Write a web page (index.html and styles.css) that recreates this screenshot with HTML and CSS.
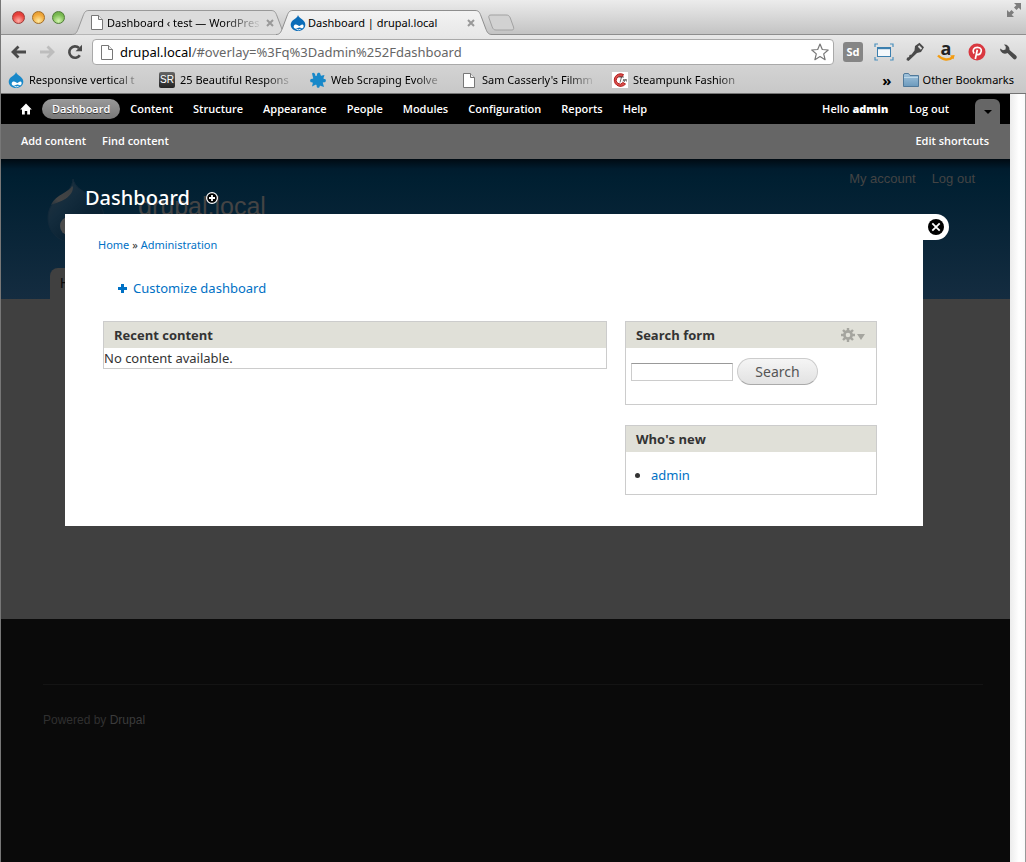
FILE: index.html
```html
<!DOCTYPE html>
<html lang="en">
<head>
<meta charset="utf-8">
<title>Dashboard | drupal.local</title>
<link rel="stylesheet" href="styles.css">
</head>
<body>
<svg class="defs" width="0" height="0" aria-hidden="true">
  <defs>
    <linearGradient id="tabOn" x1="0" y1="0" x2="0" y2="1"><stop offset="0" stop-color="#f3f3f3"/><stop offset="1" stop-color="#e8e8e8"/></linearGradient>
    <linearGradient id="folder" x1="0" y1="0" x2="0" y2="1"><stop offset="0" stop-color="#a3c4dc"/><stop offset="1" stop-color="#6c9abd"/></linearGradient>
    <linearGradient id="drop" x1="0" y1="0" x2="1" y2="1"><stop offset="0" stop-color="#26343e"/><stop offset=".35" stop-color="#142c3d"/><stop offset=".6" stop-color="#0b2334"/><stop offset="1" stop-color="#0a1f30"/></linearGradient>
    <linearGradient id="shine" x1="1" y1="0" x2="0" y2="1"><stop offset="0" stop-color="#3a3f42"/><stop offset=".7" stop-color="#444"/><stop offset="1" stop-color="#26343e"/></linearGradient>
  </defs>
  <symbol id="i-page" viewBox="0 0 12 15"><path d="M.5 .5H7.5L11.500 4.500V14.500H.5Z" fill="#fff" stroke="#777"/><path d="M7.500 .5V4.500H11.500" fill="#eee" stroke="#777"/></symbol>
  <symbol id="i-drupal" viewBox="0 0 16 16"><path d="M8 0C8.500 2 10 2.800 12 4.300C14 5.800 15.300 7.500 15.300 9.700C15.300 13.300 12 16 8 16S.7 13.300 .7 9.700C.7 7.500 2 5.800 4 4.500C6 3.200 7.500 2.200 8 0Z" fill="currentColor"/><path d="M4.200 13C3 11.500 4 9.500 5.800 9.500C7.500 9.500 8.500 11 9.300 11C10.200 11 11 9.500 12.500 9.600C14 9.800 14 12.800 12.600 13.200C11.500 13.500 10.500 12.500 9.500 12.500C8 12.500 5.800 14.700 4.200 13Z" fill="#fff"/><path d="M6.500 14.400Q8.500 15.400 10.600 14.300" fill="none" stroke="#fff" stroke-width=".9"/></symbol>
</svg>

<div class="window">
  <header class="chrome">
    <div class="tabstrip">
      <div class="lights">
        <button class="light red" aria-label="Close window"></button>
        <button class="light amber" aria-label="Minimize"></button>
        <button class="light green" aria-label="Zoom"></button>
      </div>
      <div class="tab">
        <svg class="tab-shape" viewBox="0 0 216 25" aria-hidden="true"><path d="M0 24.500C4 24.500 5 22 6.500 18L11 6C12.500 2 13.500 .5 17 .5H199C202.500 .5 203.500 2 205 6L209.500 18C211 22 212 24.500 216 24.500" fill="#dcdcdc" stroke="#999"/></svg>
        <svg class="page-icon" aria-hidden="true"><use href="#i-page"/></svg>
        <span class="tab-title fade">Dashboard ‹ test — WordPres</span>
        <button class="tab-close" aria-label="Close tab"><svg viewBox="0 0 8 8"><path d="M1 1L7 7M7 1L1 7"/></svg></button>
      </div>
      <div class="tab active">
        <svg class="tab-shape" viewBox="0 0 216 25" aria-hidden="true"><path d="M0 25V24.500C4 24.500 5 22 6.500 18L11 6C12.500 2 13.500 .5 17 .5H199C202.500 .5 203.500 2 205 6L209.500 18C211 22 212 24.500 216 24.500V25" fill="url(#tabOn)"/><path d="M0 24.500C4 24.500 5 22 6.500 18L11 6C12.500 2 13.500 .5 17 .5H199C202.500 .5 203.500 2 205 6L209.500 18C211 22 212 24.500 216 24.500" fill="none" stroke="#8e8e8e"/></svg>
        <svg class="drupal-icon dark" aria-hidden="true"><use href="#i-drupal"/></svg>
        <span class="tab-title">Dashboard | drupal.local</span>
        <button class="tab-close" aria-label="Close tab"><svg viewBox="0 0 8 8"><path d="M1 1L7 7M7 1L1 7"/></svg></button>
      </div>
      <button class="new-tab" aria-label="New tab"><svg viewBox="0 0 28 17"><path d="M4 1H19C21.500 1 22.500 2 23.300 4L26.500 13C27 15 26.500 16 25 16H9C7 16 6 15 5.200 13L2 4C1.300 2 2 1 4 1Z" fill="#d2d2d2" stroke="#a2a2a2"/></svg></button>
      <button class="fullscreen" aria-label="Full screen"><svg viewBox="0 0 14 14"><path d="M7 0H14V7L11.700 4.700L9.500 7L7 4.500L9.300 2.300ZM7 14H0V7L2.300 9.300L4.500 7L7 9.500L4.700 11.700Z" fill="#7d7d7d"/></svg></button>
    </div>

    <div class="navbar">
      <div class="nav-buttons">
        <button aria-label="Back"><svg viewBox="0 0 16 14"><path d="M7.500 1.500L2 7L7.500 12.500M2.500 7H15" fill="none" stroke="#4a4a4a" stroke-width="2.800"/></svg></button>
        <button aria-label="Forward"><svg viewBox="0 0 16 14"><path d="M8.500 1.500L14 7L8.500 12.500M13.500 7H1" fill="none" stroke="#bdbdbd" stroke-width="2.800"/></svg></button>
        <button aria-label="Reload"><svg viewBox="0 0 16 16"><path d="M12.800 11.200A5.700 5.700 0 1 1 12 4" fill="none" stroke="#4a4a4a" stroke-width="2.600"/><path d="M15 .8V7.200H8.600Z" fill="#4a4a4a"/></svg></button>
      </div>
      <div class="omnibox">
        <svg class="page-icon" aria-hidden="true"><use href="#i-page"/></svg>
        <a class="url" href="#overlay"><span class="host">drupal.local</span>/#overlay=%3Fq%3Dadmin%252Fdashboard</a>
        <button class="star" aria-label="Bookmark this page"><svg viewBox="0 0 18 18"><path d="M9 1L11.300 6.500L17.200 7L12.700 10.900L14.100 16.700L9 13.600L3.900 16.700L5.300 10.900L.8 7L6.700 6.500Z" fill="#fff" stroke="#777" stroke-width="1.200" stroke-linejoin="round"/></svg></button>
      </div>
      <div class="extensions">
        <button class="sd">Sd</button>
        <button aria-label="Window resizer"><svg viewBox="0 0 20 20"><path d="M1 5V2H4M16 2H19V5M19 15V18H16M4 18H1V15" fill="none" stroke="#4a90bd" stroke-width="1.200"/><rect x="3.500" y="5.500" width="13" height="9" fill="#f4f8fb" stroke="#3c7fae"/><path d="M3 6.200H17" stroke="#3c7fae" stroke-width="2"/></svg></button>
        <button aria-label="Key"><svg viewBox="0 0 20 20"><path d="M10 4L14.500 .8L19 5.300L16 10L12 11L3.500 19L1.500 18L2 15.800L4 15L4.500 13L6.500 12.500L9.500 8.500Z" fill="#4a4a4a"/><path d="M13.500 4L16.500 7" stroke="#ddd" stroke-width="2"/></svg></button>
        <button class="amazon" aria-label="Amazon"><span>a</span><svg viewBox="0 0 20 20"><path d="M2 13.500C7 18.500 13 18.500 17 15" fill="none" stroke="#f39c12" stroke-width="2.400"/><path d="M14 13.500L18.700 13L17.500 17.300Z" fill="#f39c12"/></svg></button>
        <button aria-label="Pinterest"><svg viewBox="0 0 20 20"><circle cx="10" cy="10" r="8.500" fill="#d93840"/><path d="M7 11.500C4.800 8 7 5.300 10.500 5.300C14.500 5.300 15 8.700 13.600 11C12.500 13 10.200 13.200 9.300 11.700M10.300 7.800L8.300 17" fill="none" stroke="#fff" stroke-width="1.700"/></svg></button>
        <button aria-label="Settings"><svg viewBox="0 0 20 20"><path d="M6 2.500A5 5 0 0 1 11.500 8L18 13.500A2.100 2.100 0 0 1 15.300 16.800L9.500 11A5 5 0 0 1 2 6.500L5 8.300L7.500 7.500L7.800 4.700Z" fill="#4a4a4a"/></svg></button>
      </div>
    </div>

    <nav class="bookmarks" aria-label="Bookmarks">
      <a class="bookmark" href="#"><svg class="drupal-icon" aria-hidden="true"><use href="#i-drupal"/></svg><span class="fade">Responsive vertical t</span></a>
      <a class="bookmark" href="#"><span class="sr">SR</span><span class="fade">25 Beautiful Respons</span></a>
      <a class="bookmark" href="#"><svg class="drupal-icon" viewBox="0 0 16 16" aria-hidden="true"><path d="M2 1.500C3.500 0 5 1 5.500 4C6.500 4 7 3.500 7 2.500C7 0 10.500 0 10.500 2.500C10.500 3.500 11 4 12 3.500L14.500 3L13.500 6C13.500 7 14 7 15 7C16.500 7.500 16 10.500 14 10.200C13 10 12.500 10.500 13 11.500L14 15L11 14C10 13.500 9.700 14 9.500 15C9 16.500 6.500 16 6.700 14C6.700 13 6 12.500 5 13L2 14.500L2.700 11.500C3 10.500 2.500 10 1.500 10.200C-.5 10 -.3 6.800 2 6.800C3 7 3.500 6.500 3 5.500Z" fill="#1888c9"/></svg><span class="fade">Web Scraping Evolve</span></a>
      <a class="bookmark" href="#"><svg class="page-icon" aria-hidden="true"><use href="#i-page"/></svg><span class="fade">Sam Casserly's Filmm</span></a>
      <a class="bookmark" href="#"><svg class="drupal-icon" viewBox="0 0 16 16" aria-hidden="true"><path d="M0 0H16V16H0Z" fill="#fff"/><path d="M11.500 2.500A6.300 6.300 0 1 0 13.500 12L11 10.500A3.800 3.800 0 1 1 10 5Z" fill="#d8504c" stroke="#b51c1c"/><path d="M6.500 5H12M9.500 5L8 10.500M11 9.500L12 7L12.500 9.500L14 7L14.500 9.500" fill="none" stroke="#444" stroke-width=".8"/></svg><span class="fade">Steampunk Fashion</span></a>
      <button class="more" aria-label="More bookmarks">»</button>
      <a class="other" href="#"><svg viewBox="0 0 16 14" aria-hidden="true"><path d="M.5 13.500V2Q.5 .5 2 .5H5.500L7 2.500H15.500V13.500Z" fill="url(#folder)" stroke="#50799a"/><path d="M1 4.500H15" stroke="#bdd7e8"/></svg>Other Bookmarks</a>
    </nav>
  </header>

  <div class="viewport">
    <div class="page">
      <div class="admin-bar">
        <nav class="menu" aria-label="Administration">
          <a class="home" href="#" aria-label="Home"><svg viewBox="0 0 12 12"><path d="M6 .5L11.800 6.500H10V11.500H7.200V8H4.800V11.500H2V6.500H.2Z" fill="#fff"/></svg></a>
          <a class="current" href="#">Dashboard</a>
          <a href="#">Content</a>
          <a href="#">Structure</a>
          <a href="#">Appearance</a>
          <a href="#">People</a>
          <a href="#">Modules</a>
          <a href="#">Configuration</a>
          <a href="#">Reports</a>
          <a href="#">Help</a>
        </nav>
        <div class="account">
          <a href="#">Hello <b>admin</b></a>
          <a href="#">Log out</a>
          <button class="toggle" aria-label="Hide shortcuts"><svg viewBox="0 0 8 4"><path d="M0 0H8L4 4Z"/></svg></button>
        </div>
      </div>
      <nav class="shortcuts" aria-label="Shortcuts">
        <a href="#">Add content</a>
        <a href="#">Find content</a>
        <a class="edit" href="#">Edit shortcuts</a>
      </nav>

      <div class="stage">
        <div class="site">
          <div class="site-header">
            <div class="site-brand">
              <svg class="site-logo" viewBox="0 0 58 66" aria-hidden="true"><path d="M26 0C28 8 34 11 42 16C51 22 57 29 57 39C57 54 45 64 29 64S1 54 1 39C1 29 6 22 14 17C21 12 25 9 26 0Z" fill="url(#drop)" stroke="#12293a"/><path d="M25 7C23 13 9 15 4 26C9 24 26 20 26 8Z" fill="url(#shine)"/><ellipse cx="21" cy="47" rx="8" ry="9" fill="#4b4b4b"/></svg>
              <span class="site-name">drupal.local</span>
              <div class="site-account"><a href="#">My account</a><a href="#">Log out</a></div>
            </div>
            <a class="site-tab" href="#">Home</a>
          </div>
          <div class="site-main"></div>
          <footer class="site-footer"><p>Powered by <a href="#">Drupal</a></p></footer>
        </div>

        <section class="overlay">
          <div class="overlay-head">
            <h1>Dashboard</h1>
            <button class="add" aria-label="Add to shortcuts"><svg viewBox="0 0 12 12"><circle cx="6" cy="6" r="5.400" fill="#000" stroke="#fff" stroke-width="1.200"/><path d="M6 3V9M3 6H9" stroke="#fff" stroke-width="1.800"/></svg></button>
          </div>
          <div class="panel">
            <button class="close" aria-label="Close overlay"><svg viewBox="0 0 16 16"><circle cx="8" cy="8" r="8"/><path d="M4.300 4.300L11.700 11.700M11.700 4.300L4.300 11.700" stroke="#fff" stroke-width="1.800"/></svg></button>
            <div class="crumbs"><a href="#">Home</a> » <a href="#">Administration</a></div>
            <a class="customize" href="#"><svg viewBox="0 0 9 9" aria-hidden="true"><path d="M4.500 0V9M0 4.500H9" stroke="#0071c5" stroke-width="3"/></svg>Customize dashboard</a>
            <div class="columns">
              <div class="block">
                <h2>Recent content</h2>
                <p class="empty">No content available.</p>
              </div>
              <div class="side">
                <div class="block">
                  <h2>Search form
                    <button class="gear" aria-label="Configure block"><svg viewBox="0 0 24 14"><g stroke="#a5a59f" fill="none"><circle cx="7" cy="7" r="3.600" stroke-width="2.600"/><path d="M7 0V3M7 11V14M0 7H3M11 7H14M2 2L4.200 4.200M9.800 9.800L12 12M12 2L9.800 4.200M4.200 9.800L2 12" stroke-width="2.400"/></g><path d="M16 6H24L20 12Z" fill="#a5a59f"/></svg></button>
                  </h2>
                  <form class="search">
                    <input type="text" aria-label="Search">
                    <button type="button">Search</button>
                  </form>
                </div>
                <div class="block">
                  <h2>Who's new</h2>
                  <ul><li><a href="#">admin</a></li></ul>
                </div>
              </div>
            </div>
          </div>
        </section>
      </div>
    </div>
    <div class="scrollbar"></div>
  </div>
</div>
</body>
</html>
```
FILE: styles.css
```css
* { box-sizing: border-box; }
body { margin: 0; font: 12px/16px "Noto Sans", "Open Sans", sans-serif; color: #000; }
a { color: inherit; text-decoration: none; }
button { margin: 0; padding: 0; border: 0; background: none; font: inherit; color: inherit; display: flex; align-items: center; justify-content: center; }
h1, h2, p, ul { margin: 0; padding: 0; }
.defs { position: absolute; }
.window { min-height: 100vh; display: flex; flex-direction: column; border-left: 1px solid #777; }

/* browser chrome */
.chrome { border-bottom: 1px solid #747474; background: #cecece; }
.tabstrip { display: flex; align-items: flex-end; height: 35px; padding: 0 5px 0 11px; background: linear-gradient(#ececec, #c2c2c2); box-shadow: inset 0 -1px #8e8e8e; }
.lights { display: flex; gap: 7px; width: 53px; height: 24px; margin-right: 7px; }
.light { width: 13px; height: 13px; flex: none; border-radius: 50%; border: 1px solid; }
.red { background: radial-gradient(circle at 50% 80%, #ffb0a8, #e8433d 60%, #d33); border-color: #9c3a38; }
.amber { background: radial-gradient(circle at 50% 80%, #ffe9a0, #f0a83a 60%, #dc9331); border-color: #a26d25; }
.green { background: radial-gradient(circle at 50% 80%, #d5f5b0, #7bbc52 60%, #68a744); border-color: #4f7c37; }
.tab { position: relative; isolation: isolate; display: flex; align-items: center; width: 216px; height: 25px; padding: 0 14px 0 19px; gap: 4px; }
.tab.active { z-index: 1; margin-left: -12px; padding-left: 14px; padding-right: 17px; gap: 2px; }
.tab-shape { position: absolute; inset: 0; z-index: -1; width: 100%; height: 100%; }
.tab-title { flex: 1; overflow: hidden; white-space: nowrap; font-size: 11px; }
.tab-close svg { width: 8px; height: 8px; stroke: #999; stroke-width: 2; }
.fade { -webkit-mask-image: linear-gradient(90deg, #000 75%, transparent); mask-image: linear-gradient(90deg, #000 75%, transparent); }
.page-icon { width: 12px; height: 15px; flex: none; }
.drupal-icon { width: 16px; height: 16px; flex: none; color: #1888c9; }
.drupal-icon.dark { color: #0a6cb8; }
.new-tab { width: 28px; height: 17px; margin: 0 0 4px -5px; }
.fullscreen { width: 14px; height: 14px; margin: 0 0 18px auto; }

.navbar { display: flex; align-items: center; gap: 9px; height: 33px; padding: 1px 8px 0 10px; background: linear-gradient(#e8e8e8, #d2d2d2); }
.nav-buttons { display: flex; gap: 12px; width: 72px; }
.nav-buttons svg { width: 16px; height: 16px; }
.omnibox { flex: 1; display: flex; align-items: center; gap: 7px; height: 26px; padding: 0 4px 0 8px; border: 1px solid #a9a9a9; border-radius: 4px; background: #fff; }
.url { flex: 1; font-size: 13px; color: #666; }
.host { color: #000; }
.star svg { width: 18px; height: 18px; }
.extensions { display: flex; gap: 11px; }
.extensions button { position: relative; width: 20px; height: 20px; }
.extensions svg { width: 20px; height: 20px; }
.extensions .sd { border-radius: 3px; background: #858585; color: #fff; font-size: 11px; font-weight: 700; }
.amazon span { font: 700 18px/16px "Open Sans", sans-serif; align-self: flex-start; margin-top: -2px; color: #222; }
.amazon svg { position: absolute; inset: 0; }

.bookmarks { display: flex; align-items: center; gap: 16px; height: 25px; padding: 0 12px 1px 7px; background: linear-gradient(#d2d2d2, #c8c8c8); font-size: 11px; }
.bookmark { display: flex; align-items: center; gap: 5px; width: 135px; }
.bookmark .fade { flex: 1; overflow: hidden; white-space: nowrap; }
.bookmark .page-icon { width: 16px; }
.sr { width: 16px; height: 16px; flex: none; border-radius: 2px; background: linear-gradient(#666, #222); color: #fff; font: 10px/16px "Liberation Sans", sans-serif; text-align: center; }
.more { margin-left: auto; font-size: 15px; font-weight: 700; }
.other { display: flex; align-items: center; gap: 4px; margin-left: -5px; white-space: nowrap; }
.other svg { width: 16px; height: 14px; }

/* page */
.viewport { flex: 1; display: flex; }
.page { flex: 1; display: flex; flex-direction: column; }
.scrollbar { width: 16px; background: linear-gradient(90deg, #ececec, #fff 60%, #fafafa); border-right: 1px solid #999; }
.admin-bar, .shortcuts { color: #fff; font-family: "Open Sans", "Noto Sans", sans-serif; font-size: 11px; font-weight: 600; }
.admin-bar { display: flex; justify-content: space-between; height: 30px; padding: 0 10px; background: #000; }
.menu { display: flex; align-items: center; }
.menu a { padding: 2px 10px; border-radius: 10px; }
.menu .home { padding: 2px 10px 2px 9px; }
.home svg { display: block; width: 12px; height: 12px; }
.menu .current { background: linear-gradient(#999, #777); text-shadow: 0 1px #333; }
.account { display: flex; align-items: center; gap: 21px; }
.toggle { align-self: flex-end; width: 25px; height: 25px; margin-left: 5px; border-radius: 6px 6px 0 0; background: #666; }
.toggle svg { width: 8px; height: 4px; }
.shortcuts { display: flex; align-items: center; gap: 16px; height: 35px; padding: 0 21px 1px 20px; background: #666; }
.edit { margin-left: auto; }

.stage { flex: 1; display: grid; }
.site, .overlay { grid-area: 1 / 1; }
.site { display: flex; flex-direction: column; font-family: "Liberation Sans", Arial, sans-serif; color: #444; }
.site-header { display: flex; flex-direction: column; justify-content: space-between; height: 140px; padding: 0 35px 0 46px; background: linear-gradient(#000a12, #001c2e 10px, #001f31 20px, #142c40); }
.site-brand { display: flex; align-items: flex-start; padding-top: 11px; }
.site-logo { width: 58px; height: 66px; margin-top: 9px; }
.site-name { margin: 20px 0 0 33px; font-size: 25px; line-height: 32px; color: #444; }
.site-account { display: flex; gap: 16px; margin-left: auto; padding-top: 1px; font-size: 13px; }
.site-tab { align-self: flex-start; margin-left: 3px; padding: 7px 10px 8px; border-radius: 8px 8px 0 0; background: #404040; color: #0c0c0c; font-size: 14px; }
.site-main { height: 320px; background: #404040; }
.site-footer { flex: 1; padding: 65px 27px 0 42px; background: #0a0a0a; }
.site-footer p { padding-top: 27px; border-top: 1px solid #141414; font-size: 12px; color: #303030; }
.site-footer a { color: #3c3c3c; }

.overlay { position: relative; align-self: start; padding: 23px 87px 0 64px; }
.overlay-head { display: flex; align-items: center; gap: 16px; height: 32px; padding: 0 20px; color: #fff; }
.overlay-head h1 { font-size: 20px; line-height: 32px; font-weight: 500; }
.add svg { display: block; width: 12px; height: 12px; }
.panel { position: relative; min-height: 312px; padding: 22px 46px 31px 33px; background: #fff; font-size: 13px; line-height: 20px; color: #333; }
.close { position: absolute; top: 0; left: 100%; width: 26px; height: 26px; border-radius: 0 13px 13px 0; background: #fff; }
.close svg { width: 16px; height: 16px; }
.panel a { color: #0071c5; }
.crumbs { font-size: 11px; line-height: 18px; color: #333; }
.panel .customize { display: flex; align-items: center; gap: 6px; margin: 24px 0 23px 20px; }
.customize svg { width: 9px; height: 9px; }
.columns { display: grid; grid-template-columns: 2fr 1fr; gap: 18px; align-items: start; padding-left: 5px; }
.side { display: grid; gap: 20px; }
.block { border: 1px solid #ccc; }
.block h2 { display: flex; justify-content: space-between; align-items: center; height: 26px; padding: 0 11px 0 10px; background: #e0e0d8; font: 700 13px/20px "Open Sans", "Noto Sans", sans-serif; }
.gear svg { width: 24px; height: 14px; }
.search { display: flex; align-items: center; gap: 4px; padding: 10px 5px 19px; }
.search input { width: 102px; height: 18px; border: 1px solid #ccc; border-top-color: #999; }
.search button { width: 81px; height: 27px; border: 1px solid #ccc; border-bottom-color: #aaa; border-radius: 14px; background: linear-gradient(#f5f5f5, #e2e2e2); font-size: 14px; color: #555; }
.block ul { padding: 13px 0 9px 25px; }
```
